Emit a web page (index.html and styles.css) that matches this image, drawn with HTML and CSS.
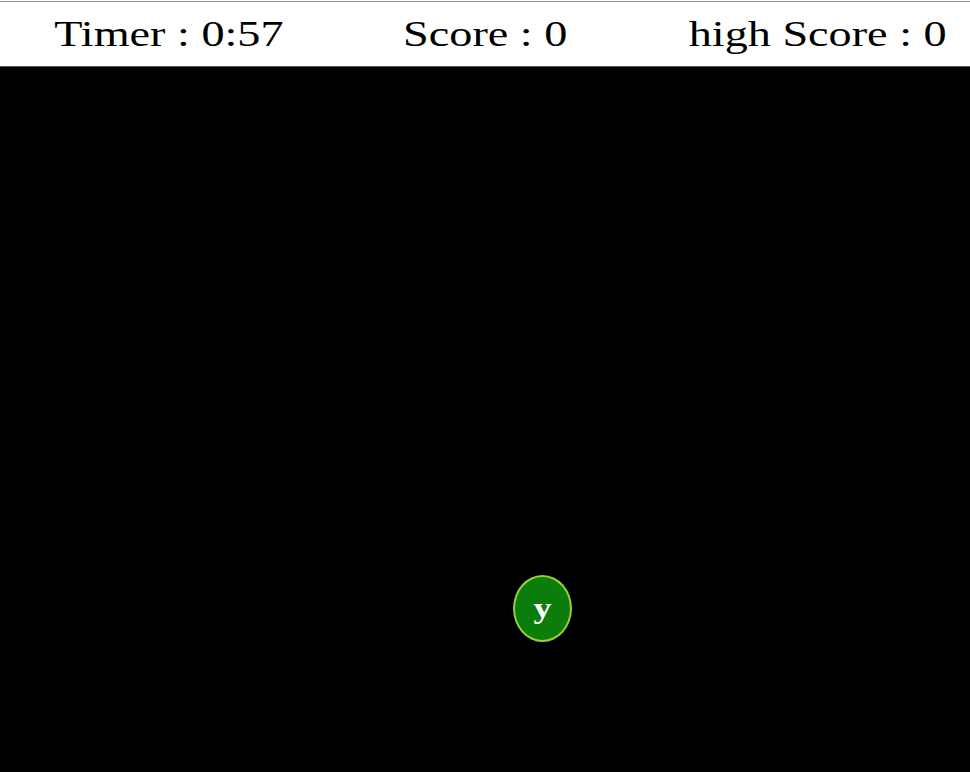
FILE: index.html
```html
<!DOCTYPE html>
<html>
<head>
<meta charset="utf-8">
<link rel="stylesheet" href="styles.css">
</head>
<body>
<div class="page">
  <header class="hud">
    <span class="stat">Timer : 0:57</span>
    <span class="stat stat-mid">Score : 0</span>
    <span class="stat">high Score : 0</span>
  </header>
  <main class="board">
    <div class="bubble"><span class="letter">y</span></div>
  </main>
</div>
</body>
</html>
```

FILE: styles.css
```css
html, body {
  margin: 0;
  padding: 0;
  background: #ffffff;
}

.page {
  width: 970px;
  height: 772px;
  display: flex;
  flex-direction: column;
  padding-top: 1px;
  box-sizing: border-box;
  overflow: hidden;
}

.hud {
  height: 63px;
  border-top: 1px solid #8a8a8a;
  border-bottom: 1px solid #555;
  display: flex;
  align-items: center;
  justify-content: space-between;
  padding: 1px 55px 0 82px;
  background: #ffffff;
  font-family: "Liberation Serif", "Times New Roman", serif;
  font-size: 35px;
  color: #000;
}

.stat {
  display: inline-block;
  white-space: nowrap;
  transform: scaleX(1.32);
  transform-origin: center;
}

.stat-mid {
  margin-left: -4px;
}

.board {
  position: relative;
  flex: 1;
  background: #000000;
}

.bubble {
  position: absolute;
  left: 513px;
  top: 508px;
  width: 59px;
  height: 67px;
  box-sizing: border-box;
  border-radius: 50%;
  border: 2px solid #9acd32;
  background: #0a7d0a;
  display: flex;
  align-items: center;
  justify-content: center;
}

.letter {
  font-family: "Liberation Serif", "Times New Roman", serif;
  font-size: 30px;
  font-weight: bold;
  color: #ffffff;
  display: inline-block;
  transform: scaleX(1.2);
  margin-top: -2px;
}
```
